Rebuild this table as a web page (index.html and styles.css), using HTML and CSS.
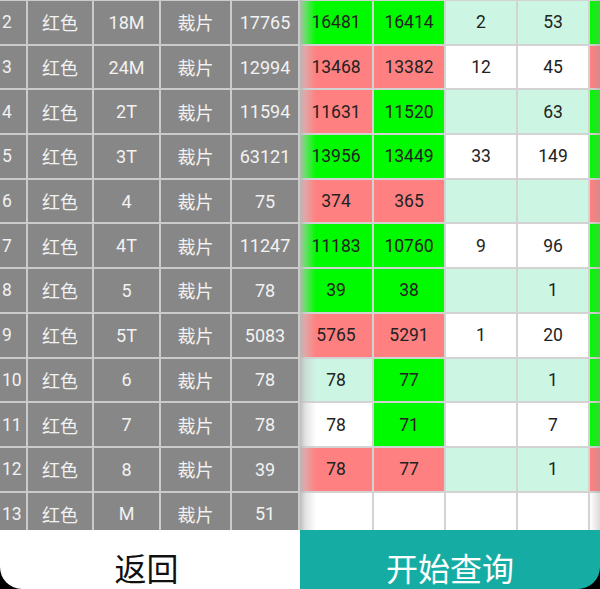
FILE: index.html
```html
<!DOCTYPE html>
<html lang="zh">
<head>
<meta charset="utf-8">
<link rel="stylesheet" href="styles.css">
</head>
<body>
<div class="screen">
  <div class="tables">
    <div class="left">
      <div class="c n">2</div><div class="c">红色</div><div class="c">18M</div><div class="c">裁片</div><div class="c">17765</div>
      <div class="c n">3</div><div class="c">红色</div><div class="c">24M</div><div class="c">裁片</div><div class="c">12994</div>
      <div class="c n">4</div><div class="c">红色</div><div class="c">2T</div><div class="c">裁片</div><div class="c">11594</div>
      <div class="c n">5</div><div class="c">红色</div><div class="c">3T</div><div class="c">裁片</div><div class="c">63121</div>
      <div class="c n">6</div><div class="c">红色</div><div class="c">4</div><div class="c">裁片</div><div class="c">75</div>
      <div class="c n">7</div><div class="c">红色</div><div class="c">4T</div><div class="c">裁片</div><div class="c">11247</div>
      <div class="c n">8</div><div class="c">红色</div><div class="c">5</div><div class="c">裁片</div><div class="c">78</div>
      <div class="c n">9</div><div class="c">红色</div><div class="c">5T</div><div class="c">裁片</div><div class="c">5083</div>
      <div class="c n">10</div><div class="c">红色</div><div class="c">6</div><div class="c">裁片</div><div class="c">78</div>
      <div class="c n">11</div><div class="c">红色</div><div class="c">7</div><div class="c">裁片</div><div class="c">78</div>
      <div class="c n">12</div><div class="c">红色</div><div class="c">8</div><div class="c">裁片</div><div class="c">39</div>
      <div class="c n">13</div><div class="c">红色</div><div class="c">M</div><div class="c">裁片</div><div class="c">51</div>
    </div>
    <div class="right">
      <div class="grid">
        <div class="d g">16481</div><div class="d g">16414</div><div class="d m">2</div><div class="d m">53</div><div class="d g"></div>
        <div class="d r">13468</div><div class="d r">13382</div><div class="d w">12</div><div class="d w">45</div><div class="d r"></div>
        <div class="d r">11631</div><div class="d g">11520</div><div class="d m"></div><div class="d m">63</div><div class="d g"></div>
        <div class="d g">13956</div><div class="d g">13449</div><div class="d w">33</div><div class="d w">149</div><div class="d g"></div>
        <div class="d r">374</div><div class="d r">365</div><div class="d m"></div><div class="d m"></div><div class="d r"></div>
        <div class="d g">11183</div><div class="d g">10760</div><div class="d w">9</div><div class="d w">96</div><div class="d g"></div>
        <div class="d g">39</div><div class="d g">38</div><div class="d m"></div><div class="d m">1</div><div class="d g"></div>
        <div class="d r">5765</div><div class="d r">5291</div><div class="d w">1</div><div class="d w">20</div><div class="d g"></div>
        <div class="d m">78</div><div class="d g">77</div><div class="d m"></div><div class="d m">1</div><div class="d g"></div>
        <div class="d w">78</div><div class="d g">71</div><div class="d w"></div><div class="d w">7</div><div class="d g"></div>
        <div class="d r">78</div><div class="d r">77</div><div class="d m"></div><div class="d m">1</div><div class="d r"></div>
        <div class="d w"></div><div class="d w"></div><div class="d w"></div><div class="d w"></div><div class="d w"></div>
      </div>
      <div class="fade-l"></div>
      <div class="fade-r"></div>
    </div>
  </div>
  <div class="footer">
    <div class="btn back">返回</div>
    <div class="btn query">开始查询</div>
  </div>
  <div class="corners"></div>
</div>
</body>
</html>
```
FILE: styles.css
```css
* { box-sizing: border-box; }
html, body {
  margin: 0;
  padding: 0;
  width: 600px;
  height: 589px;
  overflow: hidden;
  background: #fff;
}
body {
  font-family: Roboto, "Noto Sans CJK SC", sans-serif;
}
.screen {
  position: relative;
  width: 600px;
  height: 589px;
  overflow: hidden;
  display: flex;
  flex-direction: column;
}
.tables {
  display: flex;
  height: 530px;
  flex: none;
  overflow: hidden;
  background: #d2d2d2;
}
.left {
  width: 300px;
  flex: none;
  display: grid;
  grid-template-columns: 26px 64px 65px 69px 66px;
  grid-auto-rows: 42.7px;
  gap: 2px;
  padding: 1px 2px 0 0;
  background: #cbcbcb;
  align-content: start;
}
.c {
  background: #878787;
  color: #f2f2f2;
  font-size: 18px;
  display: flex;
  align-items: center;
  justify-content: center;
  white-space: nowrap;
}
.c.n {
  justify-content: flex-start;
  padding-left: 2px;
  font-size: 17.5px;
}
.right {
  position: relative;
  width: 300px;
  flex: none;
  overflow: hidden;
}
.grid {
  display: grid;
  grid-template-columns: 72px 70px 70px 70px 70px;
  grid-auto-rows: 42.7px;
  gap: 2px;
  padding-top: 1px;
  background: #d3d3d3;
  width: 370px;
}
.d {
  color: #222;
  font-size: 17.5px;
  display: flex;
  align-items: center;
  justify-content: center;
}
.g { background: #00fa00; }
.r { background: #ff8080; }
.m { background: #cdf5e4; }
.w { background: #ffffff; }
.fade-l {
  position: absolute;
  left: 0;
  top: 0;
  bottom: 0;
  width: 16px;
  background: linear-gradient(to right, rgba(185,185,185,0.95), rgba(200,200,200,0.5) 35%, rgba(220,220,220,0));
}
.fade-r {
  position: absolute;
  right: 0;
  top: 0;
  bottom: 0;
  width: 10px;
  background: linear-gradient(to right, rgba(200,200,200,0), rgba(150,150,150,0.35));
}
.footer {
  display: flex;
  height: 74px;
  flex: none;
}
.btn {
  width: 300px;
  flex: none;
  display: flex;
  align-items: center;
  justify-content: center;
  font-family: "Noto Sans CJK SC", sans-serif;
  font-size: 32px;
  line-height: 40px;
}
.back {
  background: #fff;
  color: #111;
  padding-right: 7px;
}
.query {
  background: #15aca3;
  color: #fff;
}
.corners {
  position: absolute;
  left: 0;
  right: 0;
  top: 0;
  bottom: 0;
  border-radius: 0 0 22px 22px;
  box-shadow: 0 0 0 30px #000;
  pointer-events: none;
}
```
